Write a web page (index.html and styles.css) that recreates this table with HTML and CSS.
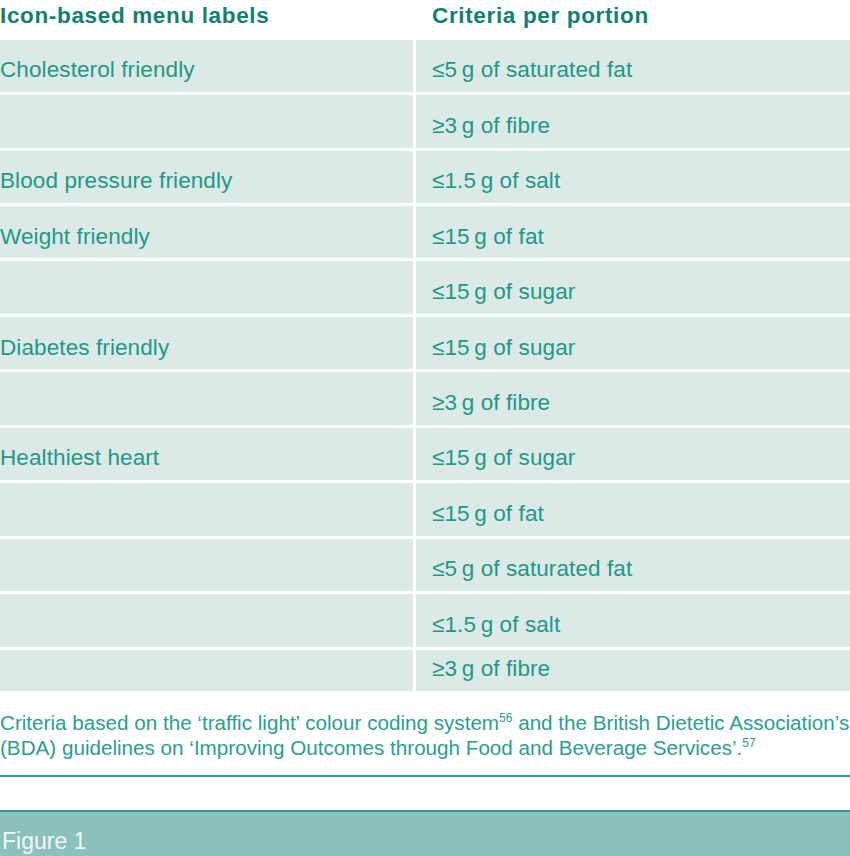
FILE: index.html
```html
<!DOCTYPE html>
<html lang="en">
<head>
<meta charset="utf-8">
<title>Figure 1</title>
<link rel="stylesheet" href="styles.css">
</head>
<body>
<div class="page">
  <div class="head">
    <div class="head-cell">Icon-based menu labels</div>
    <div class="head-cell col2">Criteria per portion</div>
  </div>
  <div class="table">
    <div class="cell">Cholesterol friendly</div>
    <div class="cell col2">≤5&#8201;g of saturated fat</div>
    <div class="cell"></div>
    <div class="cell col2">≥3&#8201;g of fibre</div>
    <div class="cell">Blood pressure friendly</div>
    <div class="cell col2">≤1.5&#8201;g of salt</div>
    <div class="cell">Weight friendly</div>
    <div class="cell col2">≤15&#8201;g of fat</div>
    <div class="cell"></div>
    <div class="cell col2">≤15&#8201;g of sugar</div>
    <div class="cell">Diabetes friendly</div>
    <div class="cell col2">≤15&#8201;g of sugar</div>
    <div class="cell"></div>
    <div class="cell col2">≥3&#8201;g of fibre</div>
    <div class="cell">Healthiest heart</div>
    <div class="cell col2">≤15&#8201;g of sugar</div>
    <div class="cell"></div>
    <div class="cell col2">≤15&#8201;g of fat</div>
    <div class="cell"></div>
    <div class="cell col2">≤5&#8201;g of saturated fat</div>
    <div class="cell"></div>
    <div class="cell col2">≤1.5&#8201;g of salt</div>
    <div class="cell"></div>
    <div class="cell col2">≥3&#8201;g of fibre</div>
  </div>
  <p class="caption">Criteria based on the ‘traffic light’ colour coding system<span class="ref">56</span> and the British Dietetic Association’s (BDA) guidelines on ‘Improving Outcomes through Food and Beverage Services’.<span class="ref">57</span></p>
  <div class="gap"></div>
  <div class="figure-bar">Figure 1</div>
</div>
</body>
</html>
```
FILE: styles.css
```css
html, body {
  margin: 0;
  padding: 0;
  background: #ffffff;
}

body {
  font-family: "Liberation Sans", Arial, sans-serif;
}

.page {
  width: 850px;
  height: 856px;
  overflow: hidden;
  display: flex;
  flex-direction: column;
}

.head {
  display: grid;
  grid-template-columns: 413px 1fr;
  column-gap: 3px;
  height: 40px;
  box-sizing: border-box;
  padding-top: 3.5px;
}

.head-cell {
  font-weight: bold;
  font-size: 22.5px;
  line-height: 24px;
  letter-spacing: 0.65px;
  color: #127f70;
}

.table {
  display: grid;
  grid-template-columns: 413px 1fr;
  grid-template-rows: repeat(11, 52.45px) 41px;
  gap: 3px;
}

.cell {
  background: #dbe9e7;
  display: flex;
  align-items: flex-end;
  box-sizing: border-box;
  padding-bottom: 9.8px;
  font-size: 22.5px;
  line-height: 24px;
  letter-spacing: 0.1px;
  color: #229887;
  white-space: nowrap;
}

.col2 {
  padding-left: 16px;
}

.caption {
  margin: 19.5px 0 0 0;
  font-size: 20.65px;
  line-height: 25px;
  color: #2a9e90;
}

.caption .ref {
  display: inline-block;
  font-size: 12px;
  line-height: 12px;
  vertical-align: top;
  margin-top: 2px;
}

.gap {
  margin-top: 15px;
  height: 33px;
  border-top: 2px solid #2e9b8e;
  border-bottom: 2px solid #2e968a;
  flex: none;
}

.figure-bar {
  flex: 1;
  background: #8bc0bc;
  color: #f2f8f7;
  font-size: 23px;
  line-height: 30px;
  padding-top: 14px;
  padding-left: 2px;
  box-sizing: border-box;
}
```
